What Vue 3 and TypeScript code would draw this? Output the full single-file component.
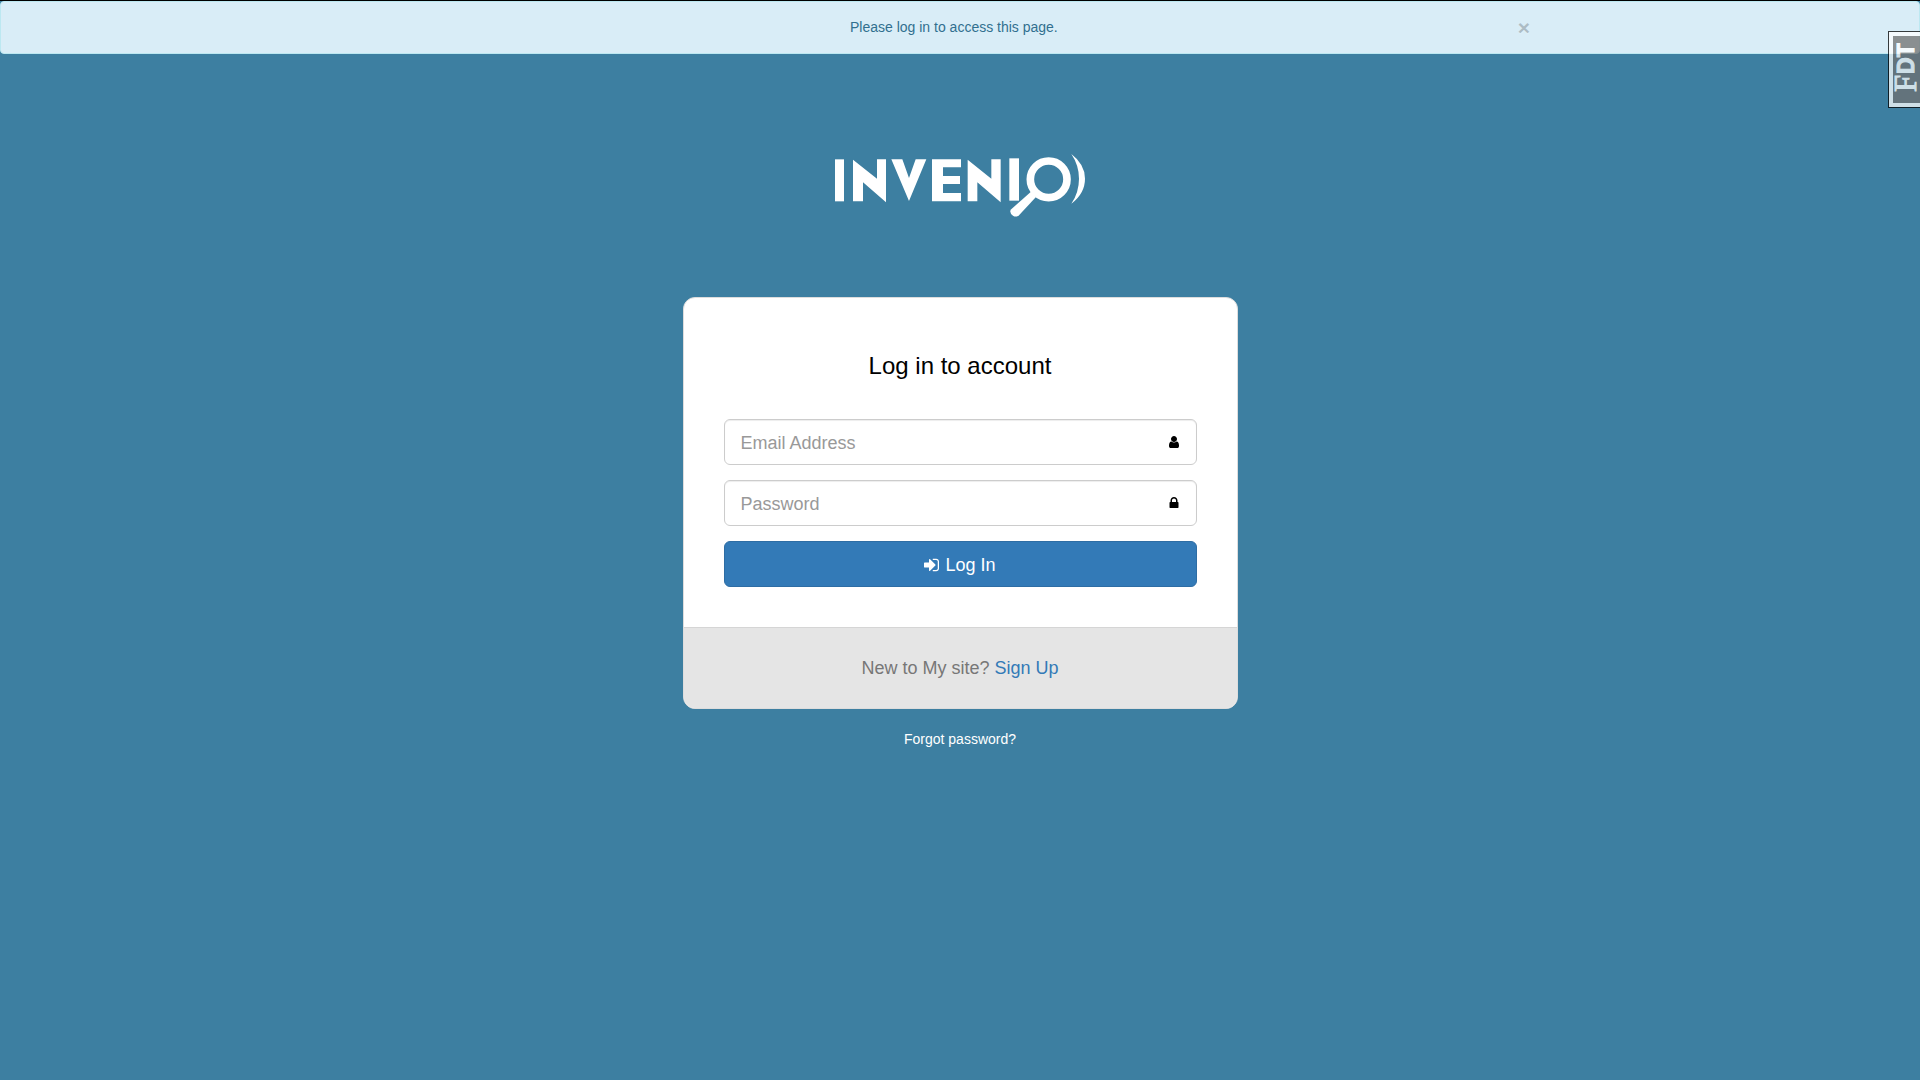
<script setup lang="ts">
import { ref } from 'vue'

const email = ref('')
const password = ref('')
const alertOpen = ref(true)
</script>

<template>
  <div class="page">
    <div v-if="alertOpen" class="alert" role="alert">
      <div class="alert-inner">
        <span class="alert-text">Please log in to access this page.</span>
        <button type="button" class="close" aria-label="Close" @click="alertOpen = false">×</button>
      </div>
    </div>

    <button type="button" class="toolbar-handle" aria-label="Show toolbar">
      <span class="handle-label">F<span class="handle-small">DT</span></span>
    </button>

    <main class="content">
      <a href="#" class="logo" aria-label="Invenio">
        <svg viewBox="45 39 750 195" width="250" height="65" fill="#fff">
          <path d="M45 58H72V184H45Z" />
          <path d="M99 59L171 116V58H198V187L129 127V184H99Z" />
          <path d="M214 58H247L267 114L287 58H319L267 183Z" />
          <path d="M336 58H423V82H369V108H420V132H369V159H423V184H336Z" />
          <path d="M443 59L514 116V58H542V187L472 127V184H443Z" />
          <path d="M568 55H597V182H568Z" />
          <circle cx="686" cy="118" r="55" fill="none" stroke="#fff" stroke-width="23" />
          <path d="M633 155L648 171L597 226Q588 233 579 227Q568 219 572 209Z" />
          <path d="M754 42Q795 73 795 116Q795 160 754 191Q777 157 777 116Q777 76 754 42Z" />
        </svg>
      </a>

      <section class="card">
        <form class="card-body" @submit.prevent>
          <h1>Log in to account</h1>
          <div class="field">
            <input v-model="email" type="text" placeholder="Email Address" aria-label="Email Address" />
            <svg class="field-icon" viewBox="0 0 1792 1792" width="14" height="14">
              <path d="M1536 1399q0 109-62.5 187t-150.5 78h-854q-88 0-150.5-78t-62.5-187q0-85 8.5-160.5t31.5-152 58.5-131 94-89 134.5-34.5q131 128 313 128t313-128q76 0 134.5 34.5t94 89 58.5 131 31.5 152 8.5 160.5zm-256-887q0 159-112.5 271.5t-271.5 112.5-271.5-112.5-112.5-271.5 112.5-271.5 271.5-112.5 271.5 112.5 112.5 271.5z" />
            </svg>
          </div>
          <div class="field">
            <input v-model="password" type="password" placeholder="Password" aria-label="Password" />
            <svg class="field-icon" viewBox="0 0 1792 1792" width="14" height="14">
              <path d="M640 768h512v-192q0-106-75-181t-181-75-181 75-75 181v192zm832 96v576q0 40-28 68t-68 28h-960q-40 0-68-28t-28-68v-576q0-40 28-68t68-28h32v-192q0-184 132-316t316-132 316 132 132 316v192h32q40 0 68 28t28 68z" />
            </svg>
          </div>
          <button type="submit" class="submit">
            <svg viewBox="128 0 1536 1792" width="15" height="18" fill="#fff">
              <path d="M1312 896q0 26-19 45l-544 544q-19 19-45 19t-45-19-19-45v-288h-448q-26 0-45-19t-19-45v-384q0-26 19-45t45-19h448v-288q0-26 19-45t45-19 45 19l544 544q19 19 19 45zm352-352v704q0 119-84.5 203.5t-203.5 84.5h-320q-13 0-22.5-9.5t-9.5-22.5q0-4-1-20t-.5-26.5 3-23.5 10-19.5 20.5-6.5h320q66 0 113-47t47-113v-704q0-66-47-113t-113-47h-312l-11.5-1-11.5-3-8-5.5-7-9-2-13.5q0-4-1-20t-.5-26.5 3-23.5 10-19.5 20.5-6.5h320q119 0 203.5 84.5t84.5 203.5z" />
            </svg>
            <span>Log In</span>
          </button>
        </form>
        <div class="card-footer">New to My site? <a href="#">Sign Up</a></div>
      </section>

      <a href="#" class="forgot">Forgot password?</a>
    </main>
  </div>
</template>

<style>
body {
  margin: 0;
  background: #3d7fa1;
}
</style>

<style scoped>
.page {
  position: relative;
  box-sizing: border-box;
  min-height: 100vh;
  border-top: 1px solid #000;
  background: #3d7fa1;
  color: #000;
  font: 14px/20px "Liberation Sans", Arial, sans-serif;
}

.alert {
  padding: 15px;
  border: 1px solid #bce8f1;
  border-radius: 4px;
  background: #d9edf7;
  color: #31708f;
}

.alert-inner {
  display: flex;
  align-items: flex-start;
  box-sizing: border-box;
  max-width: 1170px;
  height: 21px;
  margin: 0 auto;
  padding: 0 15px;
}

.alert-text {
  flex: 1;
  text-align: center;
}

.close {
  padding: 0;
  border: 0;
  background: none;
  color: #000;
  font: bold 21px/21px "Liberation Sans", Arial, sans-serif;
  text-shadow: 0 1px 0 #fff;
  opacity: 0.2;
  cursor: pointer;
}

.toolbar-handle {
  position: absolute;
  top: 30px;
  right: 0;
  display: flex;
  align-items: center;
  justify-content: flex-end;
  box-sizing: border-box;
  width: 32px;
  height: 77px;
  padding: 0;
  border: 1px solid #000;
  border-right: 0;
  background: #707070;
  box-shadow: inset 4px 4px #fff, inset 0 -4px #fff;
  color: #fff;
  opacity: 0.75;
  cursor: pointer;
}

.handle-label {
  padding-top: 4px;
  writing-mode: vertical-rl;
  rotate: 180deg;
  font: 31px/28px "Liberation Serif", serif;
  -webkit-text-stroke: 1px #fff;
}

.handle-small {
  margin-top: 1px;
  font: bold 23px/26px "Liberation Sans", sans-serif;
}

.content {
  display: flex;
  flex-direction: column;
  align-items: center;
  padding: 99px 15px 20px;
}

.logo {
  display: block;
  margin-bottom: 79px;
}

.logo svg {
  display: block;
}

.card {
  box-sizing: border-box;
  width: 100%;
  max-width: 555px;
  border: 1px solid #ddd;
  border-radius: 12px;
  background: #fff;
  overflow: hidden;
}

.card-body {
  display: flex;
  flex-direction: column;
  gap: 15px;
  padding: 54px 40px 40px;
}

h1 {
  margin: 0 0 24px;
  font-size: 24px;
  font-weight: 400;
  line-height: 28px;
  text-align: center;
}

.field {
  position: relative;
}

input {
  display: block;
  box-sizing: border-box;
  width: 100%;
  height: 46px;
  padding: 11px 46px 9px 16px;
  border: 1px solid #ccc;
  border-radius: 6px;
  background: #fff;
  box-shadow: inset 0 1px 1px rgba(0, 0, 0, 0.075);
  color: #555;
  font: 18px/24px "Liberation Sans", Arial, sans-serif;
}

input::placeholder {
  color: #999;
  opacity: 1;
}

.field-icon {
  position: absolute;
  top: 16px;
  right: 16px;
}

.submit {
  display: flex;
  align-items: center;
  justify-content: center;
  gap: 6px;
  box-sizing: border-box;
  height: 46px;
  padding: 2px 16px 0;
  border: 1px solid #2e6da4;
  border-radius: 6px;
  background: #337ab7;
  color: #fff;
  font: 18px/24px "Liberation Sans", Arial, sans-serif;
  cursor: pointer;
}

.card-footer {
  padding: 28px 15px;
  border-top: 1px solid #d5d5d5;
  background: #e5e5e5;
  color: #777;
  font-size: 18px;
  line-height: 24px;
  text-align: center;
}

.card-footer a {
  color: #337ab7;
  text-decoration: none;
}

.forgot {
  margin-top: 20px;
  color: #fff;
  text-decoration: none;
}
</style>
